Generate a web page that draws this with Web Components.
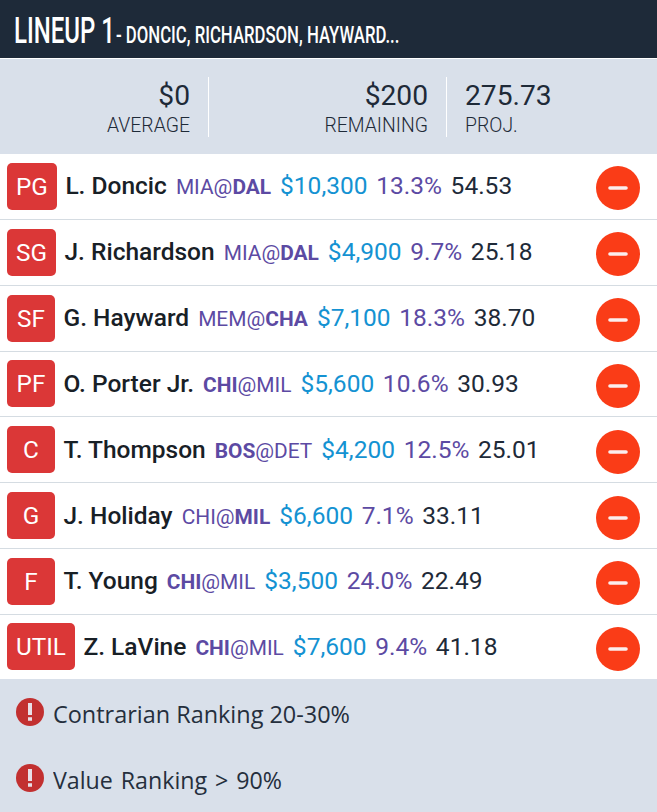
<!DOCTYPE html>
<html lang="en">
<head>
<meta charset="utf-8">
<title>Lineup 1</title>
<style>
  body {
    margin: 0;
    background: #d9e0ea;
    font-family: Roboto, "Liberation Sans", sans-serif;
    color: #1e2a38;
  }
</style>
</head>
<body>
<lineup-card>
  <lineup-header slot="header" title-text="LINEUP 1" players="- DONCIC, RICHARDSON, HAYWARD..."></lineup-header>
  <lineup-stat slot="stats" value="$0" style="width: 190px">AVERAGE</lineup-stat>
  <lineup-stat slot="stats" value="$200" style="width: 219px">REMAINING</lineup-stat>
  <lineup-stat slot="stats" value="275.73" class="last">PROJ.</lineup-stat>
  <player-row pos="PG" away="MIA" home="DAL" team="home" salary="$10,300" owned="13.3%" proj="54.53">L. Doncic</player-row>
  <player-row pos="SG" away="MIA" home="DAL" team="home" salary="$4,900" owned="9.7%" proj="25.18">J. Richardson</player-row>
  <player-row pos="SF" away="MEM" home="CHA" team="home" salary="$7,100" owned="18.3%" proj="38.70">G. Hayward</player-row>
  <player-row pos="PF" away="CHI" home="MIL" team="away" salary="$5,600" owned="10.6%" proj="30.93">O. Porter Jr.</player-row>
  <player-row pos="C" away="BOS" home="DET" team="away" salary="$4,200" owned="12.5%" proj="25.01">T. Thompson</player-row>
  <player-row pos="G" away="CHI" home="MIL" team="home" salary="$6,600" owned="7.1%" proj="33.11">J. Holiday</player-row>
  <player-row pos="F" away="CHI" home="MIL" team="away" salary="$3,500" owned="24.0%" proj="22.49">T. Young</player-row>
  <player-row pos="UTIL" away="CHI" home="MIL" team="away" salary="$7,600" owned="9.4%" proj="41.18">Z. LaVine</player-row>
  <lineup-alert slot="alerts" text-width="297">Contrarian Ranking 20-30%</lineup-alert>
  <lineup-alert slot="alerts" text-width="229" word-gap="2">Value Ranking &gt; 90%</lineup-alert>
</lineup-card>

<script>
class LineupCard extends HTMLElement {
  constructor() {
    super();
    this.attachShadow({ mode: 'open' });
    this.shadowRoot.innerHTML = `
      <style>
        :host {
          display: block;
          height: 812px;
          overflow: hidden;
        }
        .stats {
          display: flex;
          box-sizing: border-box;
          height: 95px;
          padding-top: 18px;
        }
        .players {
          display: grid;
          grid-template-rows: repeat(7, 65.85px) 1fr;
          height: 525px;
          background: #fff;
        }
        .alerts {
          display: flex;
          flex-direction: column;
          padding-top: 16px;
        }
      </style>
      <slot name="header"></slot>
      <div class="stats"><slot name="stats"></slot></div>
      <div class="players"><slot></slot></div>
      <div class="alerts"><slot name="alerts"></slot></div>
    `;
  }
}

class LineupHeader extends HTMLElement {
  constructor() {
    super();
    this.attachShadow({ mode: 'open' });
    this.shadowRoot.innerHTML = `
      <style>
        :host {
          display: block;
          height: 58px;
          background: #1e2a39;
          border-bottom: 1px solid #fff;
        }
        svg {
          display: block;
        }
        text {
          fill: #fff;
          font-family: Roboto, "Liberation Sans", sans-serif;
          font-weight: 500;
        }
      </style>
      <svg width="657" height="58">
        <text transform="translate(14 43) scale(.66 1)" font-size="36.5" textLength="153" lengthAdjust="spacingAndGlyphs">${this.getAttribute('title-text')}</text>
        <text transform="translate(116 43) scale(.74 1)" font-size="23.5" textLength="383" lengthAdjust="spacingAndGlyphs">${this.getAttribute('players')}</text>
      </svg>
    `;
  }
}

class LineupStat extends HTMLElement {
  constructor() {
    super();
    this.attachShadow({ mode: 'open' });
    this.shadowRoot.innerHTML = `
      <style>
        :host {
          display: block;
          height: 60px;
          padding-right: 18px;
          border-right: 1px solid #fff;
          text-align: right;
        }
        :host(.last) {
          padding: 0 0 0 18px;
          border: 0;
          text-align: left;
        }
        .value {
          font-size: 28.2px;
          font-weight: 370;
          line-height: 37px;
        }
        .label {
          font-size: 19.4px;
          font-weight: 350;
          line-height: 23px;
        }
      </style>
      <div class="value">${this.getAttribute('value')}</div>
      <div class="label"><slot></slot></div>
    `;
  }
}

class PlayerRow extends HTMLElement {
  constructor() {
    super();
    this.attachShadow({ mode: 'open' });
    const get = name => this.getAttribute(name);
    const side = name => get('team') === name ? `<b>${get(name)}</b>` : get(name);
    this.shadowRoot.innerHTML = `
      <style>
        :host {
          display: flex;
          align-items: center;
          box-sizing: border-box;
          padding: 0 17px 0 7px;
          border-bottom: 1px solid #d5dce2;
          white-space: nowrap;
        }
        :host([pos="UTIL"]) {
          border-bottom: 0;
        }
        .pos {
          box-sizing: border-box;
          min-width: 48px;
          height: 47px;
          padding: 0 9px;
          border-radius: 5px;
          background: #db3737;
          color: #fff;
          font-size: 24.3px;
          line-height: 47px;
          text-align: center;
        }
        .info {
          display: flex;
          align-items: baseline;
          flex: 1;
          margin-top: 1px;
          padding-left: 8.5px;
          font-size: 24.5px;
          line-height: 47px;
        }
        .name {
          color: #182026;
          font-weight: 500;
        }
        .game {
          margin-left: 9px;
          color: #5c4aa3;
          font-size: 20.9px;
          font-weight: 370;
        }
        .salary {
          margin-left: 9px;
          color: #1492d2;
        }
        .owned {
          margin-left: 8.7px;
          color: #5c4aa3;
          font-weight: 370;
        }
        .proj {
          margin-left: 8.7px;
          font-weight: 370;
        }
        svg {
          margin-top: 4px;
        }
      </style>
      <div class="pos">${get('pos')}</div>
      <div class="info">
        <span class="name"><slot></slot></span>
        <span class="game">${side('away')}@${side('home')}</span>
        <span class="salary">${get('salary')}</span>
        <span class="owned">${get('owned')}</span>
        <span class="proj">${get('proj')}</span>
      </div>
      <svg width="44" height="44" viewBox="0 0 44 44">
        <circle cx="22" cy="22" r="22" fill="#fa3c17"/>
        <path d="M14 22h16" stroke="#fbeeee" stroke-width="3.6" stroke-linecap="round"/>
      </svg>
    `;
  }
}

class LineupAlert extends HTMLElement {
  constructor() {
    super();
    this.attachShadow({ mode: 'open' });
    this.shadowRoot.innerHTML = `
      <style>
        :host {
          display: flex;
          align-items: flex-start;
          height: 66px;
          padding-left: 16px;
        }
        .icon {
          margin: 3px 9px 0 0;
        }
        text {
          fill: #252f3d;
          font-family: "Open Sans", "Noto Sans", sans-serif;
          font-size: 24px;
          font-weight: 370;
          word-spacing: ${this.getAttribute('word-gap') || 0}px;
        }
      </style>
      <svg class="icon" width="28" height="28" viewBox="0 0 28 28">
        <circle cx="14" cy="14" r="14" fill="#c23030"/>
        <path d="M12 5h4v12h-4zM12 19.2h4v3.6h-4z" fill="#e8dfe7"/>
      </svg>
      <svg width="400" height="40">
        <text x="0" y="28" textLength="${this.getAttribute('text-width')}" lengthAdjust="spacingAndGlyphs">${this.textContent.replace('>', '&gt;')}</text>
      </svg>
    `;
  }
}

customElements.define('lineup-card', LineupCard);
customElements.define('lineup-header', LineupHeader);
customElements.define('lineup-stat', LineupStat);
customElements.define('player-row', PlayerRow);
customElements.define('lineup-alert', LineupAlert);
</script>
</body>
</html>
